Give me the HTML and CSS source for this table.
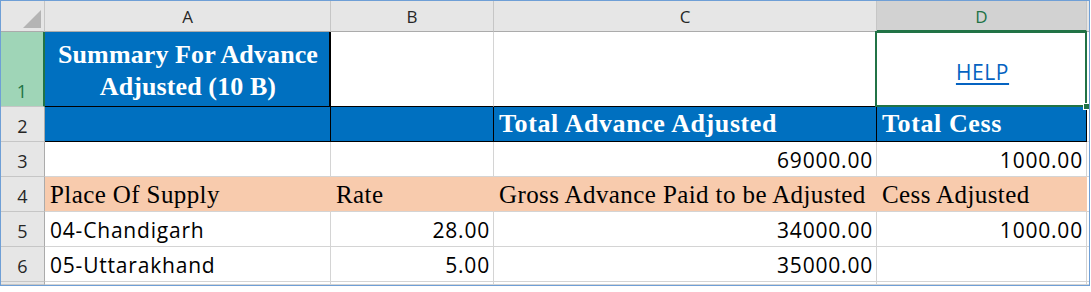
FILE: index.html
```html
<!DOCTYPE html>
<html>
<head>
<meta charset="utf-8">
<link rel="stylesheet" href="styles.css">
</head>
<body>
<div class="frame">
  <div class="sheet">
    <div class="corner"><svg width="24" height="24" viewBox="0 0 24 24"><polygon points="22,4 22,22 4,22" fill="#b4b4b4"/></svg></div>
    <div class="ch">A</div>
    <div class="ch">B</div>
    <div class="ch">C</div>
    <div class="ch ch-sel">D</div>
    <div class="ch ch-end"></div>

    <div class="rh rh-sel">1</div>
    <div class="c title">Summary For Advance<br>Adjusted (10 B)</div>
    <div class="c r1b"></div>
    <div class="c r1c"></div>
    <div class="c help-cell"><a class="help" href="#">HELP</a><span class="sel"><span class="handle"></span></span></div>
    <div class="c e"></div>

    <div class="rh">2</div>
    <div class="c blue"></div>
    <div class="c blue"></div>
    <div class="c blue hb">Total Advance Adjusted</div>
    <div class="c blue hb">Total Cess</div>
    <div class="c e"></div>

    <div class="rh">3</div>
    <div class="c"></div>
    <div class="c"></div>
    <div class="c num">69000.00</div>
    <div class="c num">1000.00</div>
    <div class="c e"></div>

    <div class="rh">4</div>
    <div class="c peach serif">Place Of Supply</div>
    <div class="c peach serif">Rate</div>
    <div class="c peach serif">Gross Advance Paid to be Adjusted</div>
    <div class="c peach serif">Cess Adjusted</div>
    <div class="c e"></div>

    <div class="rh">5</div>
    <div class="c txt">04-Chandigarh</div>
    <div class="c num">28.00</div>
    <div class="c num">34000.00</div>
    <div class="c num">1000.00</div>
    <div class="c e"></div>

    <div class="rh">6</div>
    <div class="c txt">05-Uttarakhand</div>
    <div class="c num">5.00</div>
    <div class="c num">35000.00</div>
    <div class="c"></div>
    <div class="c e"></div>

    <div class="rh"></div>
    <div class="c"></div>
    <div class="c"></div>
    <div class="c"></div>
    <div class="c"></div>
    <div class="c e"></div>
  </div>
</div>
</body>
</html>
```
FILE: styles.css
```css
* { box-sizing: border-box; }
html, body { margin: 0; padding: 0; background: #ffffff; }
.frame {
  width: 1090px;
  height: 286px;
  border: 1px solid #6f9fd6;
  overflow: hidden;
  background: #ffffff;
}
.sheet {
  display: grid;
  grid-template-columns: 44px 286px 163px 383px 210px 2px;
  grid-template-rows: 31px 75px 35px 35px 35px 35px 35px 3px;
}
.corner {
  background: #e6e6e6;
  border-right: 1px solid #c6c6c6;
  border-bottom: 1px solid #ababab;
  display: flex;
  justify-content: flex-end;
  align-items: flex-end;
  overflow: hidden;
}
.corner svg { display: block; margin: 0 1px 1px 0; }
.ch {
  background: #e6e6e6;
  border-right: 1px solid #c6c6c6;
  border-bottom: 1px solid #ababab;
  font-family: "Open Sans", "Liberation Sans", sans-serif;
  font-size: 17px;
  color: #262626;
  display: flex;
  align-items: center;
  justify-content: center;
  line-height: 1;
  padding-top: 1px;
}
.ch-sel {
  background: #d2d2d2;
  color: #217346;
  border-bottom: 2px solid #217346;
}
.ch-end { border-right: none; }
.rh {
  background: #e6e6e6;
  border-right: 1px solid #ababab;
  border-bottom: 1px solid #c6c6c6;
  font-family: "Open Sans", "Liberation Sans", sans-serif;
  font-size: 18px;
  color: #262626;
  display: flex;
  align-items: flex-end;
  justify-content: center;
  line-height: 30px;
  padding-bottom: 0;
}
.rh-sel {
  background: #9fd5b7;
  color: #217346;
  border-right: 2px solid #217346;
}
.c {
  border-right: 1px solid #d4d4d4;
  border-bottom: 1px solid #d4d4d4;
  display: flex;
  align-items: flex-end;
  padding: 0 3px 1px 5px;
  font-family: "Open Sans", "Liberation Sans", sans-serif;
  font-size: 21px;
  letter-spacing: 0.8px;
  line-height: 30px;
  color: #000000;
  white-space: nowrap;
  overflow: visible;
}
.e { border-right: none; padding: 0; }
.title {
  background: #0070c0;
  color: #ffffff;
  font-family: "Liberation Serif", "Times New Roman", serif;
  font-weight: bold;
  font-size: 26px;
  letter-spacing: 0.1px;
  line-height: 32px;
  text-align: center;
  justify-content: center;
  padding-bottom: 3px;
  border-right: 2px solid #000000;
  border-bottom: 1px solid #000000;
  white-space: normal;
}
.r1b, .r1c { border-bottom: 1px solid #000000; }
.help-cell {
  position: relative;
  justify-content: center;
  align-items: center;
  padding-top: 6px;
}
.help {
  color: #0563c1;
  text-decoration: underline;
  text-underline-offset: 3px;
  font-family: "Open Sans", "Liberation Sans", sans-serif;
  font-size: 21px;
  letter-spacing: 0.6px;
}
.sel {
  position: absolute;
  left: -2px;
  top: -1px;
  right: -1px;
  bottom: -1px;
  border: 2px solid #217346;
  pointer-events: none;
}
.handle {
  position: absolute;
  right: -5px;
  bottom: -5px;
  width: 7px;
  height: 7px;
  background: #217346;
  border: 1px solid #ffffff;
}
.blue {
  background: #0070c0;
  border-right: 1px solid #000000;
  border-bottom: 1px solid #000000;
}
.hb {
  color: #ffffff;
  font-family: "Liberation Serif", "Times New Roman", serif;
  font-weight: bold;
  font-size: 26px;
  letter-spacing: 0.6px;
  line-height: 32px;
  padding-bottom: 1px;
}
.num { justify-content: flex-end; padding-bottom: 1px; }
.txt { padding-left: 5px; }
.peach { background: #f8cbad; border-right-color: #f8cbad; }
.peach:nth-last-child(2) { border-right-color: #d4d4d4; }
.serif {
  font-family: "Liberation Serif", "Times New Roman", serif;
  font-size: 25px;
  letter-spacing: 0.4px;
  line-height: 32px;
  padding-bottom: 0;
}
```
